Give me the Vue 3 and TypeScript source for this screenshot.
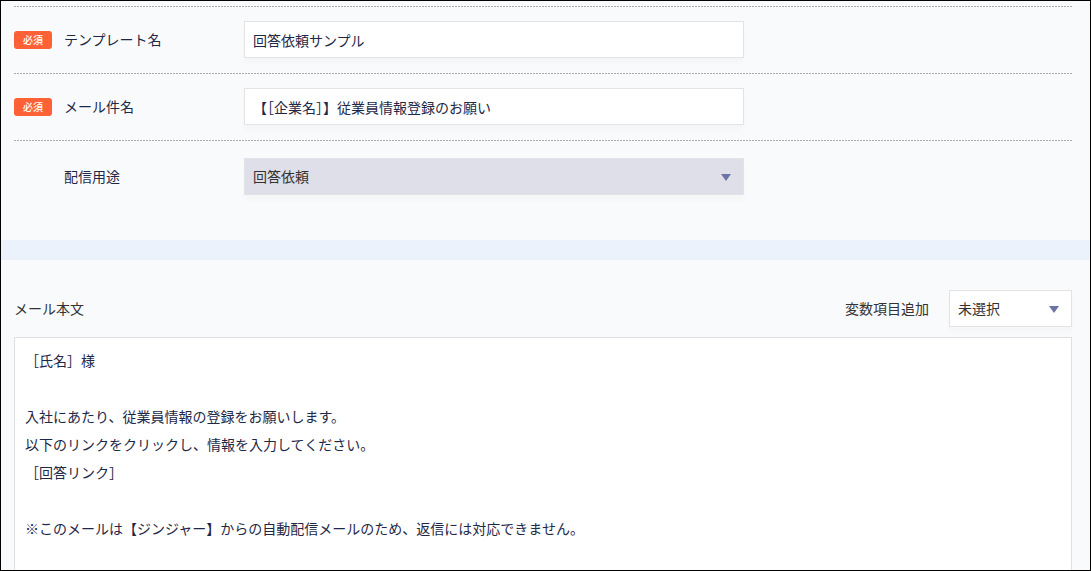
<script setup lang="ts">
import { ref } from 'vue'

interface TextField {
  id: string
  label: string
  value: string
}

const fields = ref<TextField[]>([
  { id: 'template-name', label: 'テンプレート名', value: '回答依頼サンプル' },
  { id: 'mail-subject', label: 'メール件名', value: '【［企業名］】従業員情報登録のお願い' },
])

const usage = ref('回答依頼')
const variable = ref('未選択')

const body = ref(
  [
    '［氏名］様',
    '',
    '入社にあたり、従業員情報の登録をお願いします。',
    '以下のリンクをクリックし、情報を入力してください。',
    '［回答リンク］',
    '',
    '※このメールは【ジンジャー】からの自動配信メールのため、返信には対応できません。',
  ].join('\n'),
)
</script>

<template>
  <main class="frame">
    <section class="settings">
      <div v-for="field in fields" :key="field.id" class="row">
        <div class="heading">
          <span class="badge">必須</span>
          <label :for="field.id">{{ field.label }}</label>
        </div>
        <input :id="field.id" v-model="field.value" class="control" type="text" />
      </div>
      <div class="row last">
        <div class="heading">
          <label class="indented" for="usage">配信用途</label>
        </div>
        <div class="select wide">
          <select id="usage" v-model="usage" class="control" disabled>
            <option>回答依頼</option>
          </select>
          <svg class="arrow" viewBox="0 0 10 7" aria-hidden="true"><path d="M0 0H10L5 7Z" /></svg>
        </div>
      </div>
    </section>

    <section class="mail">
      <div class="toolbar">
        <label for="mail-body">メール本文</label>
        <div class="variable">
          <label for="variable">変数項目追加</label>
          <div class="select">
            <select id="variable" v-model="variable" class="control">
              <option>未選択</option>
            </select>
            <svg class="arrow" viewBox="0 0 10 7" aria-hidden="true"><path d="M0 0H10L5 7Z" /></svg>
          </div>
        </div>
      </div>
      <textarea id="mail-body" v-model="body" class="body"></textarea>
    </section>
  </main>
</template>

<style>
body {
  margin: 0;
}
</style>

<style scoped>
.frame,
.frame * {
  box-sizing: border-box;
}

.frame {
  display: flex;
  flex-direction: column;
  height: 100vh;
  overflow: hidden;
  border: 1px solid #000;
  background: #f9fafc;
  color: #333;
  font-family: 'Noto Sans CJK JP', 'Liberation Sans', sans-serif;
  font-size: 14px;
  line-height: 20px;
}

.settings {
  padding: 5px 18px 0 13px;
  border-bottom: 20px solid #ecf2fb;
}

.row {
  display: grid;
  grid-template-columns: 230px minmax(0, 500px);
  align-items: center;
  padding: 15px 0;
  background: repeating-linear-gradient(to right, #a9abae 0 2px, transparent 2px 3px) top / 100% 1px no-repeat;
}

.row.last {
  padding: 18px 0 45px;
}

.heading {
  display: flex;
  align-items: center;
  gap: 12px;
  color: #1f2947;
}

label {
  padding-bottom: 2px;
}

.indented {
  margin-left: 50px;
}

.badge {
  width: 38px;
  border-radius: 3px;
  background: #ff6137;
  color: #fff;
  font-size: 10px;
  font-weight: 500;
  line-height: 18px;
  text-align: center;
}

.control {
  display: block;
  width: 100%;
  height: 37px;
  margin: 0;
  padding: 0 8px;
  border: 1px solid #e3e3e5;
  border-radius: 0;
  outline: 0;
  background: #fff;
  box-shadow: 0 5px 5px rgba(60, 40, 0, 0.02);
  color: #1f2947;
  font: inherit;
}

.select {
  position: relative;
  width: 123px;
}

.select.wide {
  width: 100%;
}

.select .control {
  appearance: none;
  padding-bottom: 2px;
  color: #333;
  opacity: 1;
}

.select .control:disabled {
  background: #dfdfe9;
}

.arrow {
  position: absolute;
  top: 16px;
  right: 13px;
  width: 10px;
  height: 7px;
  fill: #6b74a5;
  pointer-events: none;
}

.mail {
  display: flex;
  flex: 1;
  flex-direction: column;
  min-height: 0;
  padding: 30px 18px 0 13px;
}

.toolbar {
  display: flex;
  align-items: center;
  justify-content: space-between;
  margin-bottom: 10px;
}

.variable {
  display: flex;
  align-items: center;
  gap: 20px;
}

.body {
  display: block;
  flex: 1;
  width: 100%;
  min-height: 0;
  margin: 0;
  padding: 8px 10px 10px;
  border: 1px solid #dfe0e4;
  border-bottom: 0;
  border-radius: 0;
  outline: 0;
  background: #fff;
  color: #1f2947;
  font: inherit;
  line-height: 28px;
  resize: none;
}
</style>
